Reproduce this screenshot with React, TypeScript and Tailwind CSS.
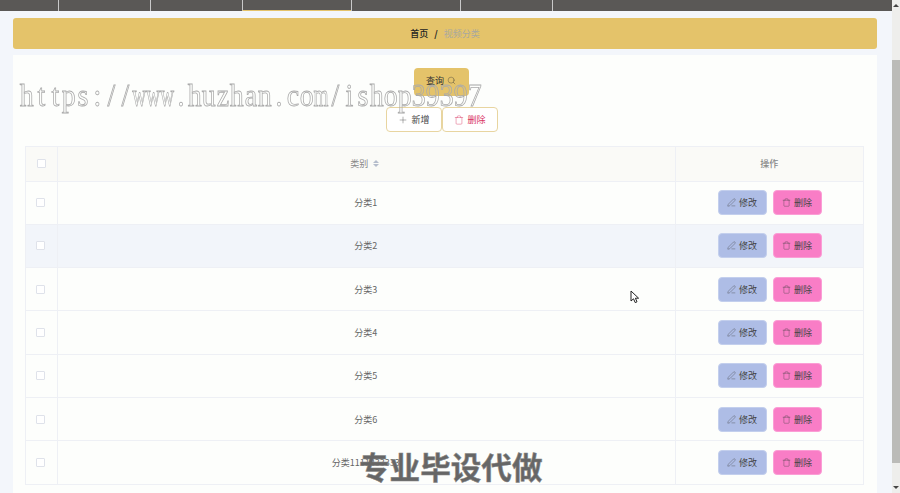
import { PenLine, Plus, Search, Trash } from 'lucide-react';

const NAV_TABS = [
  { w: 'w-[92px]' },
  { w: 'w-[92px]' },
  { w: 'w-[109px]', active: true },
  { w: 'w-[109px]' },
  { w: 'w-[92px]' },
];

const ROWS = ['分类1', '分类2', '分类3', '分类4', '分类5', '分类6', '分类1111233333'];

const WATERMARK = 'https://www.huzhan.com/ishop39397'.split('');

const FONT = 'font-["Noto_Sans_CJK_SC","Liberation_Sans",sans-serif]';

function Checkbox() {
  return <span className="block w-[9px] h-[9px] rounded-[1px] border border-[#dfe2ea] bg-white" />;
}

function Row({ label, hover }: { label: string; hover?: boolean }) {
  return (
    <div className={`flex h-[43.33px] border-b border-[#eef0f5] ${hover ? 'bg-[#f2f5fa]' : ''}`}>
      <div className="w-[32px] shrink-0 flex items-center pl-[10px] border-r border-[#eef0f5]">
        <Checkbox />
      </div>
      <div className="flex-1 flex items-center justify-center text-[9px] text-[#666] pr-[1px] border-r border-[#eef0f5]">{label}</div>
      <div className="w-[187.5px] shrink-0 flex items-center gap-[6px] pl-[42px]">
        <button className="w-[49px] h-[25px] flex items-center justify-center gap-[3px] rounded-[4px] border border-[#c3cfed] bg-[#aebde6] text-[9px] text-[#444]">
          <PenLine size={9} strokeWidth={1} />
          修改
        </button>
        <button className="w-[49px] h-[25px] flex items-center justify-center gap-[3px] rounded-[4px] border border-[#fb9ed5] bg-[#f97dc6] text-[9px] text-[#444]">
          <Trash size={9} strokeWidth={1} />
          删除
        </button>
      </div>
    </div>
  );
}

export default function App() {
  return (
    <div className={`relative h-[493px] overflow-hidden flex bg-[#f3f6fb] ${FONT}`}>
      <div className="flex-1 min-w-0 flex flex-col">
        {/* Top nav */}
        <div className="h-[11px] shrink-0 flex bg-[#5a5856] pl-[58px]">
          {NAV_TABS.map((t, i) => (
            <div key={i} className={`${t.w} border-l border-[#c9c9c9] ${t.active ? 'border-b border-b-[#e4c36a]' : ''}`} />
          ))}
          <div className="border-l border-[#c9c9c9]" />
        </div>

        {/* Breadcrumb */}
        <div className="ml-[13px] mr-[15px] mt-[7px] h-[31px] shrink-0 flex items-center justify-center gap-[5px] rounded-[3px] bg-[#e4c36a] text-[9px]">
          <span className="font-medium text-[#222]">首页</span>
          <span className="font-bold text-[#222] mx-[1px]">/</span>
          <span className="text-[#a8a8a0]">视频分类</span>
        </div>

        {/* Card */}
        <div className="ml-[13px] mr-[15px] mt-[6px] flex-1 bg-[#fdfefc] pl-[12px] pr-[13px] pt-[13px]">
          <div className="flex justify-center pr-[7px]">
            <button className="w-[55px] h-[28px] pb-[3px] flex items-center justify-center gap-[3px] rounded-[4px] bg-[#e4c36a] text-[9px] text-[#333]">
              查询
              <Search size={9} strokeWidth={1} />
            </button>
          </div>
          <div className="mt-[11px] flex justify-center pr-[5px]">
            <button className="w-[56px] h-[25px] flex items-center justify-center gap-[3px] rounded-[4px] border border-[#e8d5a0] bg-white text-[9px] text-[#444]">
              <Plus size={10} strokeWidth={1} />
              新增
            </button>
            <button className="w-[56px] h-[25px] flex items-center justify-center gap-[3px] rounded-[4px] border border-[#e8d5a0] bg-white text-[9px] text-[#d9345f]">
              <Trash size={10} strokeWidth={1} />
              删除
            </button>
          </div>

          {/* Table */}
          <div className="mt-[14px] border-t border-x border-[#eef0f5]">
            <div className="flex h-[34.5px] border-b border-[#eef0f5] bg-[#fafaf7] text-[9px] text-[#888]">
              <div className="w-[32px] shrink-0 flex items-center pl-[11px] border-r border-[#eef0f5]">
                <Checkbox />
              </div>
              <div className="flex-1 flex items-center justify-center gap-[5px] pr-[3px] border-r border-[#eef0f5]">
                类别
                <span className="flex flex-col gap-[1px]">
                  <span className="w-0 h-0 border-x-[3.5px] border-x-transparent border-b-[3px] border-b-[#b4bccc]" />
                  <span className="w-0 h-0 border-x-[3.5px] border-x-transparent border-t-[3px] border-t-[#b4bccc]" />
                </span>
              </div>
              <div className="w-[187.5px] shrink-0 flex items-center justify-center font-medium">操作</div>
            </div>
            {ROWS.map((r, i) => (
              <Row key={r} label={r} hover={i === 1} />
            ))}
          </div>

          {/* Pagination, cut off by the window */}
          <div className="mt-[8px] ml-[403px] flex">
            <span className="w-[18px] h-[4px] bg-[#f0f0f0]" />
            <span className="w-[18px] h-[4px] ml-[7px] bg-[#999]" />
            <span className="w-[20px] h-[4px] ml-[7px] bg-[#f0f0f0]" />
            <span className="w-[26px] h-[4px] ml-[37px] bg-[#f0f0f0]" />
          </div>
        </div>
      </div>

      {/* Scrollbar */}
      <div className="w-[8px] shrink-0 bg-[#eeeeec] flex flex-col">
        <div className="h-[60px] flex justify-center pt-[4px]">
          <span className="w-0 h-0 border-x-[3px] border-x-transparent border-b-[3px] border-b-[#444]" />
        </div>
        <div className="h-[403px] bg-[#bbbbb8]" />
        <div className="flex-1 flex justify-center items-end pb-[4px]">
          <span className="w-0 h-0 border-x-[3px] border-x-transparent border-t-[3px] border-t-[#444]" />
        </div>
      </div>

      {/* Watermarks */}
      <div className="absolute left-[20px] top-[78px] flex will-change-transform font-['Liberation_Serif',serif] text-[31px] leading-[36px] text-transparent [-webkit-text-stroke:0.8px_#aaaaaa] pointer-events-none whitespace-nowrap">
        {WATERMARK.map((c, i) => (
          <span key={i} className="w-[14px] flex justify-center">
            <span className={c === 'w' || c === 'm' ? 'scale-x-[0.62]' : 'scale-x-[0.9]'}>{c}</span>
          </span>
        ))}
      </div>
      <div className="absolute left-[359px] top-[444px] text-[30.6px] leading-[44px] font-bold text-[#666] [-webkit-text-stroke:0.5px_#888] pointer-events-none whitespace-nowrap">
        专业毕设代做
      </div>

      {/* Mouse cursor */}
      <svg className="absolute left-[630px] top-[290px]" width="10" height="14" viewBox="0 0 10 14">
        <path d="M1 1 L1 11 L3.5 8.8 L5.2 12.6 L7 11.8 L5.4 8.2 L8.6 8.2 Z" fill="#fff" stroke="#222" strokeWidth="1" />
      </svg>
    </div>
  );
}
